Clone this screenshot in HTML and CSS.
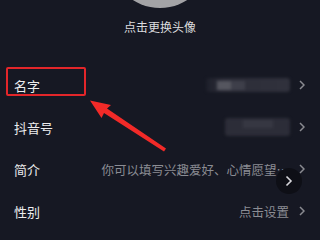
FILE: index.html
```html
<!DOCTYPE html>
<html lang="zh">
<head>
<meta charset="utf-8">
<link rel="stylesheet" href="styles.css">
</head>
<body>
<div class="page">
  <div class="header">
    <div class="avatar"></div>
    <div class="caption">点击更换头像</div>
  </div>
  <div class="list">
    <div class="row">
      <span class="label">名字</span>
      <div class="blur blur-name"><span class="blob-a"></span><span class="blob-b"></span></div>
      <svg class="chev" viewBox="0 0 6 10"><path d="M1 1 L5 5 L1 9"/></svg>
      <div class="highlight"></div>
    </div>
    <div class="row">
      <span class="label">抖音号</span>
      <div class="blur blur-id"><span class="blob-c"></span></div>
      <svg class="chev" viewBox="0 0 6 10"><path d="M1 1 L5 5 L1 9"/></svg>
    </div>
    <div class="row">
      <span class="label">简介</span>
      <span class="value">你可以填写兴趣爱好、心情愿望…</span>
      <svg class="chev" viewBox="0 0 6 10"><path d="M1 1 L5 5 L1 9"/></svg>
      <div class="fab"><svg viewBox="0 0 8 12"><path d="M1.5 1.5 L6 6 L1.5 10.5"/></svg></div>
    </div>
    <div class="row">
      <span class="label">性别</span>
      <span class="value">点击设置</span>
      <svg class="chev" viewBox="0 0 6 10"><path d="M1 1 L5 5 L1 9"/></svg>
    </div>
  </div>
  <svg class="arrow" viewBox="0 0 320 239" width="320" height="239">
    <polygon points="90,100.5 111,105 107,108.5 166,148.5 164,151.5 104,113 101.5,118" fill="#f22a28"/>
  </svg>
</div>
</body>
</html>
```
FILE: styles.css
```css
html, body {
  margin: 0;
  padding: 0;
  background: #161823;
}
.page {
  position: relative;
  width: 320px;
  height: 239px;
  overflow: hidden;
  background: #161823;
  font-family: "Noto Sans CJK SC", "Noto Sans", sans-serif;
}
.header {
  display: flex;
  flex-direction: column;
  align-items: center;
}
.avatar {
  width: 100px;
  height: 100px;
  border-radius: 50%;
  background: #a3a3a6;
  margin-top: -92px;
}
.caption {
  margin-top: 11px;
  font-size: 12px;
  line-height: 16px;
  color: #dcdcdf;
}
.list {
  margin-top: 29px;
}
.row {
  position: relative;
  display: flex;
  align-items: center;
  height: 42px;
  padding: 0 15px 0 14px;
}
.label {
  flex: 1;
  font-size: 13px;
  color: #ececee;
}
.value {
  font-size: 12.5px;
  color: #8b8c93;
  margin-right: 10px;
}
.chev {
  width: 6px;
  height: 10px;
  fill: none;
  stroke: #8a8b91;
  stroke-width: 1.5;
}
.blur {
  position: relative;
  margin-right: 9px;
  border-radius: 3px;
  filter: blur(1.5px);
}
.blur-name {
  width: 84px;
  height: 14px;
  background: linear-gradient(90deg, #1d1f2a 0%, #2c2d38 20%, #30313c 100%);
}
.blob-a {
  position: absolute;
  left: 11px;
  top: 3px;
  width: 14px;
  height: 9px;
  background: #55565f;
}
.blob-b {
  position: absolute;
  left: 25px;
  top: 3px;
  width: 14px;
  height: 9px;
  background: #3e3f4a;
}
.blur-id {
  width: 65px;
  height: 18px;
  background: #2c2d38;
}
.blob-c {
  position: absolute;
  left: 18px;
  top: 2px;
  width: 30px;
  height: 8px;
  background: #363742;
}
.highlight {
  position: absolute;
  left: 6px;
  top: 3px;
  width: 76px;
  height: 25px;
  border: 2px solid #e3262a;
  border-radius: 2px;
}
.fab {
  position: absolute;
  left: 276px;
  top: 20px;
  width: 26px;
  height: 26px;
  border-radius: 50%;
  background: #0e0f16;
  display: flex;
  align-items: center;
  justify-content: center;
}
.fab svg {
  width: 8px;
  height: 12px;
  fill: none;
  stroke: #d8d8dc;
  stroke-width: 1.6;
}
.arrow {
  position: absolute;
  left: 0;
  top: 0;
}
```
